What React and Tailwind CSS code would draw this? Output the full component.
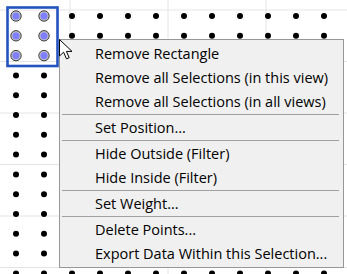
import React from 'react';

const COLS = Array.from({ length: 12 }, (_, i) => 16 + i * 28);
const ROWS = Array.from({ length: 14 }, (_, j) => 16 + j * 19.8);
const H_LINES = [10, 61.5, 113, 164.5, 216, 267.5];
const V_LINES = [70, 168, 266];

const isSelected = (x, y) => x < 50 && y < 60;

const menu = [
  ['Remove Rectangle', 'Remove all Selections (in this view)', 'Remove all Selections (in all views)'],
  ['Set Position...'],
  ['Hide Outside (Filter)', 'Hide Inside (Filter)'],
  ['Set Weight...'],
  ['Delete Points...', 'Export Data Within this Selection...'],
];

function Plot() {
  return (
    <svg width="347" height="274" className="block">
      {H_LINES.map((y) => (
        <line key={'h' + y} x1="0" x2="347" y1={y} y2={y} stroke="#e4e4e4" strokeWidth="1" />
      ))}
      {V_LINES.map((x) => (
        <line key={'v' + x} x1={x} x2={x} y1="0" y2="274" stroke="#e4e4e4" strokeWidth="1" />
      ))}
      {ROWS.map((y) =>
        COLS.map((x) =>
          isSelected(x, y) ? (
            <g key={x + '-' + y}>
              <circle cx={x} cy={y} r="5.2" fill="#c4c4c4" stroke="#3a3a3a" strokeWidth="1" />
              <circle cx={x} cy={y} r="3.6" fill="#8080ff" />
            </g>
          ) : (
            <circle key={x + '-' + y} cx={x} cy={y} r="3" fill="#000" />
          )
        )
      )}
      <rect x="7.5" y="7.5" width="50" height="58.5" fill="none" stroke="#2453c0" strokeWidth="2.6" />
    </svg>
  );
}

function Cursor() {
  return (
    <svg width="15" height="21" viewBox="0 0 15 21" className="absolute left-[59px] top-[39px]">
      <path
        d="M0.5 0.5 L0.5 17 L4.6 13.2 L7.5 19.8 L10.2 18.7 L7.4 12.4 L13 12.4 Z"
        fill="#fff"
        stroke="#000"
        strokeWidth="1"
      />
    </svg>
  );
}

export default function App() {
  return (
    <div className="relative w-[347px] h-[274px] overflow-hidden bg-white">
      <Plot />

      {/* context menu */}
      <div
        className="absolute left-[59px] top-[39px] w-[285px] bg-[#f0f0f0] border border-[#979797] pt-[2px] pb-[1px] text-[14.5px] text-black"
        style={{ fontFamily: '"Open Sans", "Noto Sans", sans-serif' }}
      >
        {menu.map((group, gi) => (
          <div key={gi}>
            {gi > 0 && <div className="h-[2px] ml-[2px] mr-[4px] border-t border-[#a0a0a0]" />}
            {group.map((label) => (
              <div key={label} className="h-6 flex items-center pl-[35px] pt-[1px] whitespace-nowrap leading-none">
                {label}
              </div>
            ))}
          </div>
        ))}
      </div>

      <Cursor />
    </div>
  );
}
